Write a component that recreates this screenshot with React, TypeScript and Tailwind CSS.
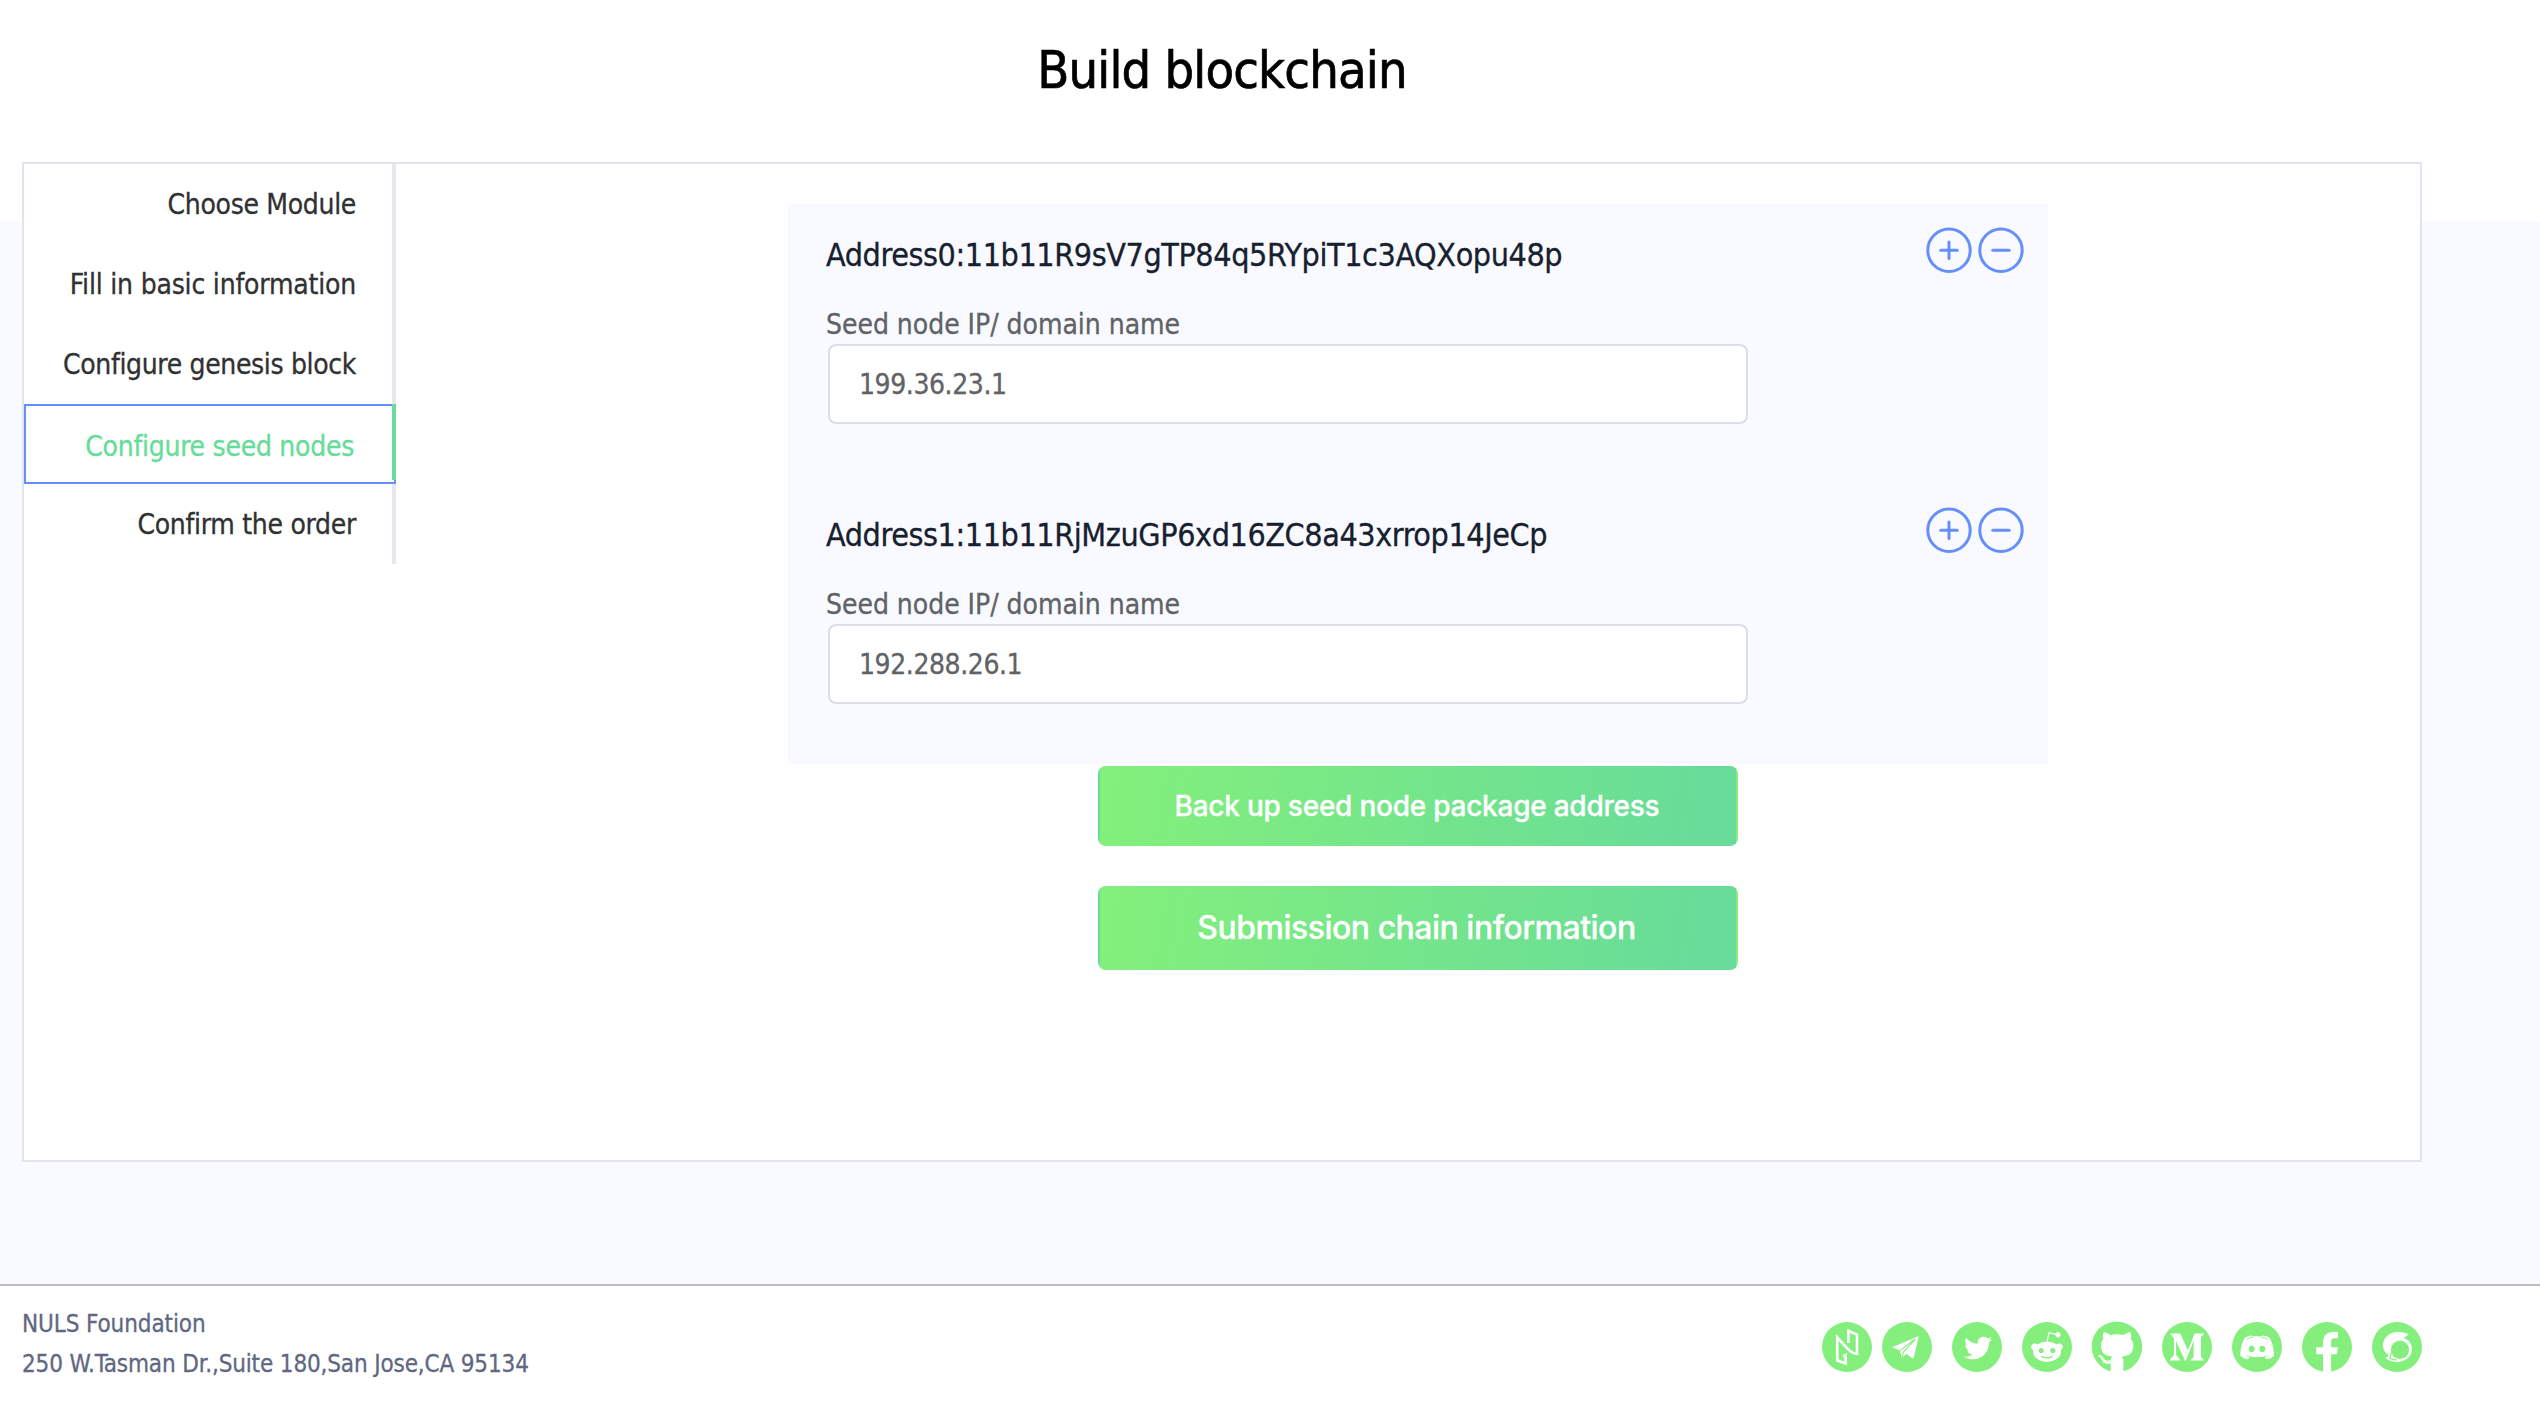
import React, { ReactNode } from 'react';
import { FaGithub, FaMediumM, FaRedditAlien, FaTwitter } from 'react-icons/fa';

const steps = [
  { label: 'Choose Module', tracking: 'tracking-[-0.32px]' },
  { label: 'Fill in basic information', tracking: 'tracking-[-0.2px]' },
  { label: 'Configure genesis block', tracking: 'tracking-[-0.35px]' },
  { label: 'Configure seed nodes', tracking: 'tracking-[-0.27px]', active: true },
  { label: 'Confirm the order', tracking: 'tracking-[-0.3px]' },
];

const nodes = [
  { address: 'Address0:11b11R9sV7gTP84q5RYpiT1c3AQXopu48p', ip: '199.36.23.1' },
  { address: 'Address1:11b11RjMzuGP6xd16ZC8a43xrrop14JeCp', ip: '192.288.26.1' },
];

function RoundButton({ plus = false }: { plus?: boolean }) {
  return (
    <button className="block" aria-label={plus ? 'Add' : 'Remove'}>
      <svg className="size-[46px] fill-none stroke-[#658ffb] stroke-[3]" viewBox="0 0 46 46" strokeLinecap="round">
        <circle cx="23" cy="23.3" r="21.2" />
        <path d="M14.8 23.3h16.4" />
        {plus && <path d="M23 15.1v16.4" />}
      </svg>
    </button>
  );
}

function Sidebar() {
  return (
    <nav className="flex w-[372px] flex-col">
      {steps.map((s) =>
        s.active ? (
          <div key={s.label} className="relative flex h-20 items-center justify-end border-2 border-[#658ffb] pt-1.5 pr-10">
            <span className={`text-[28px] leading-none text-[#67dc9a] ${s.tracking}`}>{s.label}</span>
            <span className="absolute -top-0.5 -right-0.5 h-[76px] w-1 bg-[#67dc9a]" />
          </div>
        ) : (
          <div key={s.label} className="flex h-20 items-center justify-end border-r-4 border-[#e6e6ec] pt-0.5 pr-9">
            <span className={`text-[28px] leading-none text-[#303133] ${s.tracking}`}>{s.label}</span>
          </div>
        )
      )}
    </nav>
  );
}

function SeedNode({ address, ip }: { address: string; ip: string }) {
  return (
    <div className="h-[280px] pt-[23px] pr-6 pl-[38px]">
      <div className="flex items-start justify-between">
        <div className="pt-2 text-[32px] leading-10 tracking-[-0.42px] text-[#17202e]">{address}</div>
        <div className="flex gap-1.5">
          <RoundButton plus />
          <RoundButton />
        </div>
      </div>
      <div className="-mb-px mt-[30px] text-[28px] leading-10 tracking-[-0.03px] text-[#606266]">Seed node IP/ domain name</div>
      <div className="ml-0.5 flex h-20 w-[920px] items-center rounded-lg border-2 border-[#dcdfe6] bg-white pt-0.5 pl-[29px] text-[28px] tracking-[-0.42px] text-[#606266]">
        {ip}
      </div>
    </div>
  );
}

function Badge({ children, className = '' }: { children: ReactNode; className?: string }) {
  return <a className={`flex size-[50px] items-center justify-center rounded-full bg-[#84ef7d] text-white ${className}`}>{children}</a>;
}

function Socials() {
  return (
    <div className="flex gap-5">
      <Badge className="-mr-2.5">
        <svg viewBox="0 0 50 50" className="size-full fill-none stroke-white stroke-[2.6]">
          <path d="M21 34.4l2.600-1.400v8.500l-8.400-3.200V15.300L26 27.200c2.500 2.700 5 4.200 9 4.600V12.600l-8.600-3.800V21" />
        </svg>
      </Badge>
      <Badge>
        <svg viewBox="0 0 50 50" className="size-full">
          <path fill="#fff" d="M10 25.300 36.800 14 31.800 35.600Q31.200 36.600 30 35.900L24.300 31.800 20.600 35.500Q19.600 35.200 19.400 34.200L18 28.600Z" />
          <path fill="none" stroke="#84ef7d" strokeWidth="1.1" d="M33.500 16.800 18 28.600M33 17.600 21.500 29.800 20.300 35" />
        </svg>
      </Badge>
      <Badge><FaTwitter className="mt-0.5 ml-0.5 size-7" /></Badge>
      <Badge><FaRedditAlien className="size-[34px]" /></Badge>
      <a className="flex size-[50px] items-center justify-center text-[#84ef7d]"><FaGithub className="size-[52px] shrink-0" /></a>
      <Badge><FaMediumM className="size-9" /></Badge>
      <Badge>
        <svg viewBox="0 0 50 50" className="size-full">
          <path fill="#fff" d="M13 15.600C15.500 14 18 13.400 20 13.400L20.800 14.500C23.500 14.100 26.500 14.100 29.200 14.500L30.300 13.400C32.500 13.500 35 14.200 37.300 15.600C40.300 20 42 27 42 33.600C40.500 36 37 37.300 34.200 37.300L32.200 34.600C27.500 35.600 22.500 35.600 18 34.600L16 37.300C13 37.300 10 36 8.300 33.600C8.300 27 10 20 13 15.600Z" />
          <path fill="none" stroke="#84ef7d" strokeWidth=".8" d="M14.500 17.600Q17.500 15.600 20.800 15.200M35.700 17.600Q32.700 15.600 29.200 15.200M15 33.300Q16.500 34.300 18 34.600M35.200 33.300Q33.700 34.300 32.200 34.600" />
          <ellipse cx="19.700" cy="27" rx="2.900" ry="3.200" fill="#84ef7d" />
          <ellipse cx="30.300" cy="27" rx="2.900" ry="3.200" fill="#84ef7d" />
        </svg>
      </Badge>
      <Badge>
        <svg viewBox="0 0 50 50" className="size-full">
          <path fill="#fff" d="M21 50V32.300h-6.700v-7H21V20.500C21 13.500 25 10 31.200 10H36v6.300h-3.200c-2.800 0-3.700 1.500-3.700 3.800v5.200H36l-1 7h-5.900V50Z" />
        </svg>
      </Badge>
      <Badge>
        <svg viewBox="0 0 50 50" className="size-full">
          <path fill="#fff" d="M36.500 12.200C29 9 19.500 9 14.500 14.500C8.500 21 10.500 29.500 17 33.200C16 34.700 14.800 35.300 12.800 35.700C18 39.300 23 40.700 28 39.800C35 38.500 40 33.500 40 27.300C40 22.500 37.500 18.600 33.300 16.700L31.800 15.700C33.500 14.500 35 13.800 36.500 12.200Z" />
          <circle cx="28" cy="27.800" r="9.200" fill="#84ef7d" />
          <path fill="none" stroke="#84ef7d" strokeWidth="1.200" d="M19.300 30.500Q19.300 33.500 17.800 36.200Q21.500 38 25 38" />
        </svg>
      </Badge>
    </div>
  );
}

export default function App() {
  return (
    <div className="flex h-[1420px] w-[2540px] flex-col bg-white font-['DejaVu_Sans_Condensed','DejaVu_Sans',sans-serif] [-webkit-text-stroke:0.3px]">
      <main className="h-[1284px] bg-[linear-gradient(#ffffff_222px,#f9faff_222px)] pr-[118px] pl-[22px]">
        <h1 className="flex h-[162px] items-start justify-center pt-10 text-[52px] leading-[60px] tracking-[-0.85px] text-black [-webkit-text-stroke:0.7px]">Build blockchain</h1>
        <section className="flex h-[1000px] border-2 border-[#e1e4ef] bg-white">
          <Sidebar />
          <div className="ml-[392px] flex w-[1260px] flex-col items-center pt-10">
            <div className="w-full bg-[#f9faff]">
              {nodes.map((n) => (
                <SeedNode key={n.ip} {...n} />
              ))}
            </div>
            <button className="mt-0.5 h-20 w-[640px] rounded-lg border-2 border-transparent bg-[linear-gradient(100deg,#83f07b,#66db9b)] pr-0.5 font-['Inter',sans-serif] text-[28px] font-medium tracking-[-0.24px] text-white">
              Back up seed node package address
            </button>
            <button className="mt-10 h-[84px] w-[640px] rounded-lg border-2 border-transparent bg-[linear-gradient(100deg,#83f07b,#66db9b)] pr-[3px] font-['Inter',sans-serif] text-[32px] font-medium tracking-[-0.5px] text-white">
              Submission chain information
            </button>
          </div>
        </section>
      </main>
      <footer className="flex flex-1 items-start justify-between border-t-2 border-[#bdbdbd] pr-[118px] pl-[22px]">
        <div className="pt-[18px] text-2xl leading-10 text-[#5f6882]">
          <p className="tracking-[-0.1px]">NULS Foundation</p>
          <p className="tracking-[-0.14px]">250 W.Tasman Dr.,Suite 180,San Jose,CA 95134</p>
        </div>
        <div className="pt-9">
          <Socials />
        </div>
      </footer>
    </div>
  );
}
